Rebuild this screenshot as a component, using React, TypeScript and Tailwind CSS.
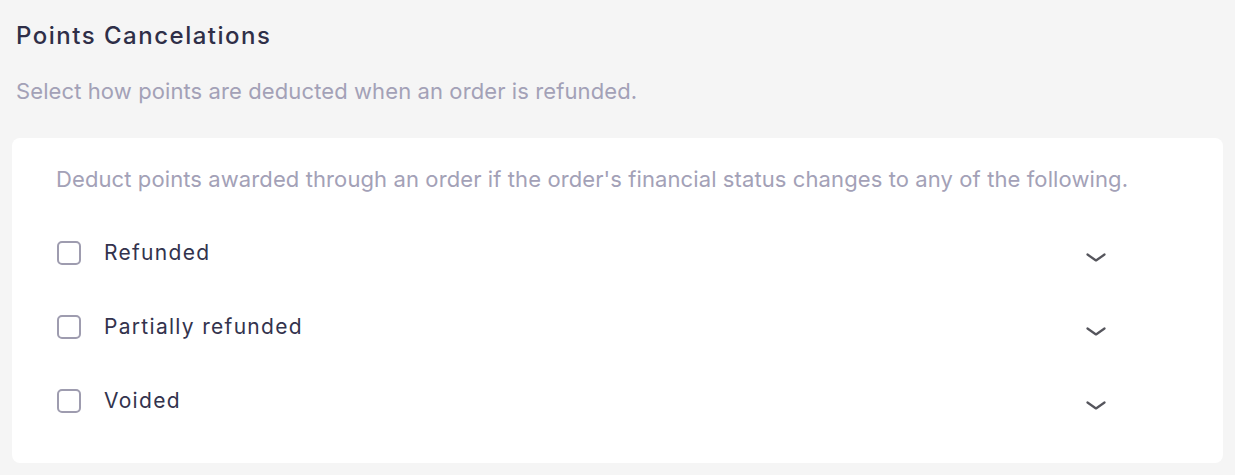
const OPTIONS = ['Refunded', 'Partially refunded', 'Voided'];

function Chevron() {
  return (
    <svg width="20" height="9" viewBox="0 0 20 9" fill="none" className="ml-auto mr-[73px] mt-2 shrink-0">
      <path d="M1.5 1.5 10 7.5l8.5-6" stroke="#55555c" strokeWidth="2.2" strokeLinecap="round" strokeLinejoin="round" />
    </svg>
  );
}

export default function App() {
  return (
    <div className="min-h-screen bg-[#f5f5f5] px-3 pb-3 pt-[20px] font-['Inter',sans-serif]">
      <h2 className="px-1 text-[24px] font-medium leading-8 tracking-[1.5px] text-[#2f2f48]">Points Cancelations</h2>
      <p className="mt-[23px] px-1 text-[22px] leading-8 tracking-[0.1px] text-[#a3a1b7]">
        Select how points are deducted when an order is refunded.
      </p>
      <div className="mt-[31px] rounded-lg bg-white pb-[46px] pl-11 pr-11 pt-[25px]">
        <p className="text-[22px] leading-8 tracking-[0.1px] text-[#a3a1b7]">
          Deduct points awarded through an order if the order's financial status changes to any of the following.
        </p>
        <div className="mt-[42px] flex flex-col gap-[42px]">
          {OPTIONS.map((label) => (
            <label key={label} className="flex h-8 items-center">
              <span className="ml-[1px] h-6 w-6 shrink-0 rounded-[5px] border-[2.5px] border-[#9e9caf]" />
              <span className="ml-[23px] text-[21px] leading-8 tracking-[1.3px] text-[#33334d]">{label}</span>
              <Chevron />
            </label>
          ))}
        </div>
      </div>
    </div>
  );
}
